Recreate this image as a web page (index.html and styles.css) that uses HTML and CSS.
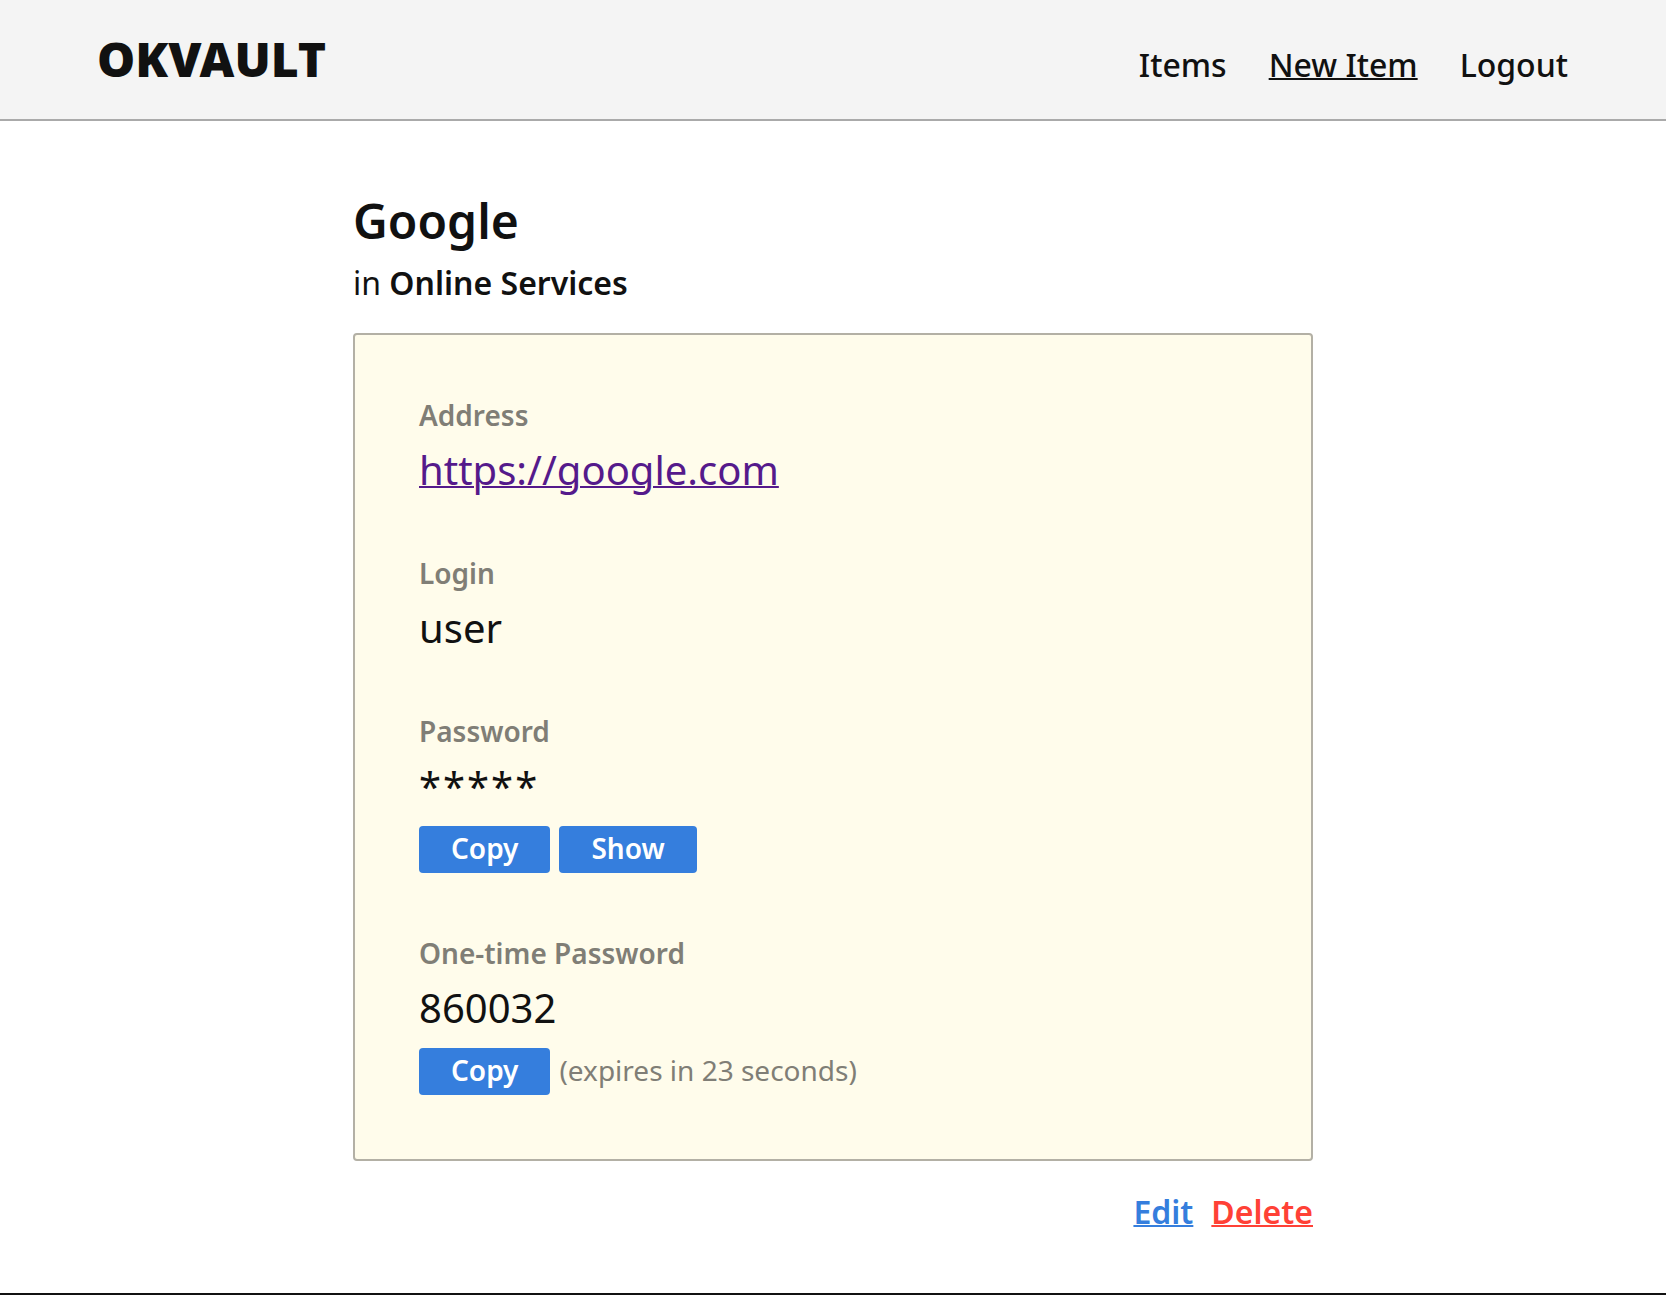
FILE: index.html
```html
<!DOCTYPE html>
<html lang="en">
<head>
<meta charset="utf-8">
<title>OKVAULT - Google</title>
<link rel="stylesheet" href="styles.css">
</head>
<body>
<header class="topbar">
  <a class="logo" href="#">OKVAULT</a>
  <nav class="nav">
    <a class="nav-link" href="#">Items</a>
    <a class="nav-link active" href="#">New Item</a>
    <a class="nav-link" href="#">Logout</a>
  </nav>
</header>
<main class="main">
  <h1 class="title">Google</h1>
  <p class="subtitle">in <strong>Online Services</strong></p>
  <section class="card">
    <div class="field">
      <div class="label">Address</div>
      <div class="value"><a class="url" href="#">https://google.com</a></div>
    </div>
    <div class="field">
      <div class="label">Login</div>
      <div class="value">user</div>
    </div>
    <div class="field field-actions">
      <div class="label">Password</div>
      <div class="value secret">*****</div>
      <div class="actions">
        <button class="btn">Copy</button>
        <button class="btn">Show</button>
      </div>
    </div>
    <div class="field field-last">
      <div class="label">One-time Password</div>
      <div class="value">860032</div>
      <div class="actions">
        <button class="btn">Copy</button>
        <span class="note">(expires in 23 seconds)</span>
      </div>
    </div>
  </section>
  <div class="item-links">
    <a class="edit" href="#">Edit</a>
    <a class="delete" href="#">Delete</a>
  </div>
</main>
<footer class="footer"></footer>
</body>
</html>
```
FILE: styles.css
```css
html, body {
  margin: 0;
  padding: 0;
}
body {
  font-family: "Noto Sans", "Open Sans", sans-serif;
  color: #111;
  background: #fff;
}
.topbar {
  display: flex;
  align-items: baseline;
  justify-content: space-between;
  background: #f4f4f4;
  border-bottom: 2px solid #aaa;
  padding: 35px 98px 36px 97px;
}
.logo {
  font-size: 48px;
  line-height: 48px;
  font-weight: 900;
  color: #111;
  text-decoration: none;
}
.nav {
  display: flex;
  gap: 42px;
}
.nav-link {
  font-size: 32px;
  line-height: 32px;
  font-weight: 500;
  color: #111;
  text-decoration: none;
}
.nav-link.active {
  text-decoration: underline;
  text-decoration-thickness: 2px;
}
.main {
  width: 960px;
  margin: 0 auto;
  padding-top: 70px;
}
.title {
  margin: 0;
  font-size: 48px;
  line-height: 60px;
  font-weight: 600;
}
.subtitle {
  margin: 8px 0 0;
  font-size: 32px;
  line-height: 48px;
}
.subtitle strong {
  font-weight: 600;
}
.card {
  margin-top: 26px;
  background: #fffceb;
  border: 2px solid #b3b0a5;
  border-radius: 4px;
  padding: 61px 64px 64px;
}
.field {
  margin-bottom: 57px;
}
.field-actions {
  margin-bottom: 61px;
}
.field-last {
  margin-bottom: 0;
}
.label {
  font-size: 28px;
  line-height: 38px;
  font-weight: 600;
  color: #807e76;
  margin-bottom: 9px;
}
.value {
  font-size: 40px;
  line-height: 54px;
}
.secret {
  letter-spacing: 2px;
}
.url {
  color: #551a8b;
  text-decoration: underline;
  text-decoration-thickness: 2px;
}
.actions {
  display: flex;
  align-items: baseline;
  gap: 9px;
  margin-top: 13px;
}
.btn {
  font-family: inherit;
  font-size: 28px;
  line-height: 45px;
  font-weight: 600;
  color: #fff;
  background: #357edd;
  border: 0;
  border-radius: 4px;
  padding: 0 32px 2px;
  margin: 0;
}
.note {
  font-size: 28px;
  color: #807e76;
}
.item-links {
  display: flex;
  justify-content: flex-end;
  gap: 18px;
  margin-top: 27px;
  font-size: 32px;
  line-height: 48px;
  font-weight: 600;
}
.edit {
  color: #357edd;
  text-decoration-thickness: 2px;
}
.delete {
  color: #ff4136;
  text-decoration-thickness: 2px;
}
.footer {
  margin-top: 57px;
  border-top: 2px solid #111;
  height: 40px;
}
```
